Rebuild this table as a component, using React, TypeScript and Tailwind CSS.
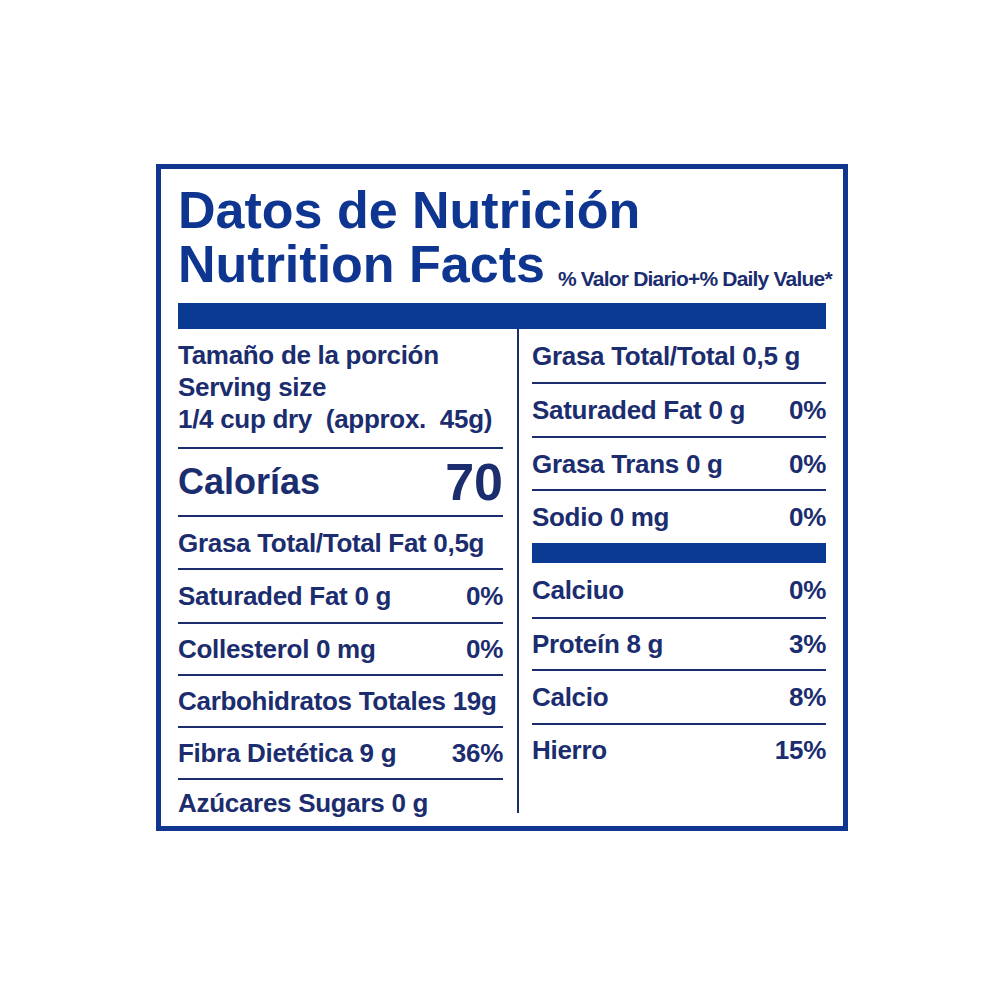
import React from 'react';

type Row = { label: string; value?: string; h: string; border?: boolean };

const leftRows: Row[] = [
  { label: 'Grasa Total/Total Fat 0,5g', h: 'h-[53px]', border: true },
  { label: 'Saturaded Fat 0 g', value: '0%', h: 'h-[54px]', border: true },
  { label: 'Collesterol 0 mg', value: '0%', h: 'h-[52px]', border: true },
  { label: 'Carbohidratos Totales 19g', h: 'h-[52px]', border: true },
  { label: 'Fibra Dietética 9 g', value: '36%', h: 'h-[52px]', border: true },
  { label: 'Azúcares Sugars 0 g', h: 'h-[46px]' },
];

const rightTop: Row[] = [
  { label: 'Grasa Total/Total 0,5 g', h: 'h-[55px]', border: true },
  { label: 'Saturaded Fat 0 g', value: '0%', h: 'h-[54px]', border: true },
  { label: 'Grasa Trans 0 g', value: '0%', h: 'h-[53px]', border: true },
  { label: 'Sodio 0 mg', value: '0%', h: 'h-[52px]' },
];

const rightBottom: Row[] = [
  { label: 'Calciuo', value: '0%', h: 'h-[56px]', border: true },
  { label: 'Proteín 8 g', value: '3%', h: 'h-[52px]', border: true },
  { label: 'Calcio', value: '8%', h: 'h-[54px]', border: true },
  { label: 'Hierro', value: '15%', h: 'h-[50px]' },
];

function FactRow({ row }: { row: Row }) {
  return (
    <div
      className={`${row.h} flex items-center justify-between ${
        row.border ? 'border-b-2 border-[#1b2d6e]' : ''
      }`}
    >
      <span className="text-[26px] leading-none font-bold tracking-[-0.3px] whitespace-nowrap">
        {row.label}
      </span>
      {row.value && (
        <span className="text-[26px] leading-none font-bold tracking-[-0.3px]">
          {row.value}
        </span>
      )}
    </div>
  );
}

export default function App() {
  return (
    <div className="w-[1000px] h-[1000px] bg-white pt-[164px] pl-[156px] font-['Liberation_Sans',Arial,sans-serif]">
      <div className="w-[692px] h-[667px] border-[5px] border-[#10368f] px-[17px] pt-[14px]">
        {/* Heading */}
        <div className="text-[#0e3590] font-bold text-[52px] leading-[54px]">
          <div className="h-[54px] whitespace-nowrap">Datos de Nutrición</div>
          <div className="h-[54px] whitespace-nowrap">
            Nutrition Facts
            <span className="ml-[13px] text-[21px] leading-none tracking-[-0.8px] text-[#1b2d6e] align-[-4px]">
              % Valor Diario+% Daily Value*
            </span>
          </div>
        </div>

        <div className="mt-[12px] h-[26px] bg-[#0b3a93]" />

        {/* Columns */}
        <div className="flex items-start text-[#1b2d6e]">
          <div className="w-[325px] flex flex-col">
            <div className="h-[120px] pt-[10px] border-b-2 border-[#1b2d6e] text-[26px] leading-[32px] font-bold tracking-[-0.3px] whitespace-nowrap">
              <div>Tamaño de la porción</div>
              <div>Serving size</div>
              <div>1/4 cup dry&nbsp; (approx.&nbsp; 45g)</div>
            </div>
            <div className="h-[68px] flex items-center justify-between border-b-2 border-[#1b2d6e]">
              <span className="text-[36px] leading-none font-bold">Calorías</span>
              <span className="text-[52px] leading-none font-bold">70</span>
            </div>
            {leftRows.map((r) => (
              <FactRow key={r.label} row={r} />
            ))}
          </div>

          <div className="ml-[14px] flex-1 h-[484px] border-l-2 border-[#1b2d6e] pl-[13px] flex flex-col">
            {rightTop.map((r) => (
              <FactRow key={r.label} row={r} />
            ))}
            <div className="h-[20px] bg-[#0b3a93]" />
            {rightBottom.map((r) => (
              <FactRow key={r.label} row={r} />
            ))}
          </div>
        </div>
      </div>
    </div>
  );
}
